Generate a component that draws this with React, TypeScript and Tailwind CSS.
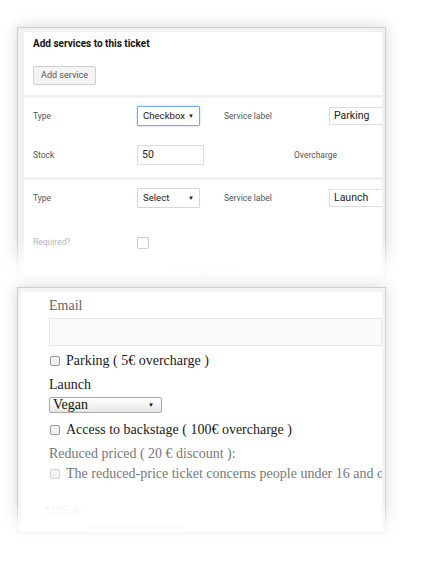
import React from "react";

const Caret = () => <span className="text-[6px] leading-none text-[#222]">▼</span>;

const FakeSelect = ({ value, focused }: { value: string; focused?: boolean }) => (
	<div
		className={`flex h-[20px] w-[63px] shrink-0 items-center justify-between rounded-[1px] border bg-white pl-[5px] pr-[5px] text-[9.6px] text-[#222] ${focused ? "border-[#7fa6dc] shadow-[0_0_2px_rgba(90,140,210,0.5)]" : "border-[#d6d6d6]"}`}
	>
		<span>{value}</span>
		<Caret />
	</div>
);

const TextBox = ({ value, w }: { value: string; w: string }) => (
	<div className={`flex h-[18px] shrink-0 items-center border border-[#dedede] bg-white pl-[4px] text-[10.5px] text-[#222] ${w}`}>
		{value}
	</div>
);

const Label = ({ children, w, faded }: { children: React.ReactNode; w: string; faded?: boolean }) => (
	<div className={`shrink-0 text-[8.5px] leading-[15px] ${faded ? "text-[#b3b3b3]" : "text-[#555]"} ${w}`}>{children}</div>
);

const ServicesCard = () => (
	<div className="relative ml-[17px] mt-[27px] h-[250px] w-[369px]">
		<div className="h-full overflow-hidden border border-[#cfcfcf] bg-[#f1f1f1] pl-[6px] pr-[3px] pt-[4px] shadow-[0_0_14px_rgba(0,0,0,0.16)]" style={{ fontFamily: "Roboto, sans-serif" }}>
			<div className="flex h-[63px] flex-col bg-white pl-[9px] pt-[4px]">
				<div className="text-[10px] font-bold leading-[16px] text-[#111]">Add services to this ticket</div>
				<div className="mt-[14px] flex h-[19px] w-[63px] items-center justify-center rounded-[2px] border border-[#cfcfcf] bg-[#f4f4f4] text-[9px] text-[#555]">
					Add service
				</div>
			</div>
			<div className="mt-[3px] flex h-[79px] flex-col gap-[19px] overflow-hidden bg-white pl-[9px] pt-[8px]">
				<div className="flex items-center">
					<Label w="w-[104px]">Type</Label>
					<FakeSelect value="Checkbox" focused />
					<Label w="ml-[24px] w-[105px]">Service label</Label>
					<TextBox value="Parking" w="w-[60px]" />
				</div>
				<div className="flex items-center">
					<Label w="w-[104px]">Stock</Label>
					<TextBox value="50" w="w-[67px] h-[20px]" />
					<Label w="ml-[90px]">Overcharge</Label>
				</div>
			</div>
			<div className="mt-[3px] flex flex-col overflow-hidden bg-white pl-[9px] pt-[8px]">
				<div className="flex items-center">
					<Label w="w-[104px]">Type</Label>
					<FakeSelect value="Select" />
					<Label w="ml-[24px] w-[105px]">Service label</Label>
					<TextBox value="Launch" w="w-[60px]" />
				</div>
				<div className="mt-[27px] flex items-center">
					<Label w="w-[104px]" faded>Required?</Label>
					<div className="h-[12px] w-[12px] rounded-[1px] border border-[#c8c8c8] bg-white" />
				</div>
				<div className="ml-[142px] mt-[14px] flex h-[14px] w-[58px] items-center justify-center border border-[#f0f0f0] text-[9px] text-[#eee]">
					Add option
				</div>
			</div>
		</div>
		<div className="absolute -left-[20px] -right-[20px] bottom-[-14px] h-[50px] bg-gradient-to-b from-white/0 via-white/80 to-white" />
	</div>
);

const SmallCheck = ({ faded }: { faded?: boolean }) => (
	<div className={`h-[10px] w-[10px] shrink-0 rounded-[2px] border ${faded ? "border-[#d6d6d6] bg-[#f3f3f3]" : "border-[#9a9a9a] bg-[#f2f2f2]"}`} />
);

const OrderCard = () => (
	<div className="relative ml-[17px] mt-[10px] h-[246px] w-[369px]">
		<div className="h-full overflow-hidden border border-[#cfcfcf] bg-[#f4f4f4] pl-[3px] pr-[3px] pt-[4px] shadow-[0_0_14px_rgba(0,0,0,0.16)]" style={{ fontFamily: '"Liberation Serif", serif' }}>
			<div className="h-full overflow-hidden bg-white pl-[28px] pt-[4px] leading-[20px]">
				<div className="text-[14px] text-[#666]">Email</div>
				<div className="mt-[2px] h-[28px] border border-[#e6e6e6] bg-[#fafafa]" />
				<div className="mt-[5px] flex items-center gap-[6px] pl-[1px]">
					<SmallCheck />
					<span className="text-[14px] text-[#1a1a1a]">Parking ( 5€ overcharge )</span>
				</div>
				<div className="mt-[4px] text-[14px] text-[#1a1a1a]">Launch</div>
				<div className="mt-[2px] flex h-[16px] w-[113px] items-center justify-between rounded-[2px] border border-[#a9a9a9] bg-gradient-to-b from-white to-[#e6e6e6] pl-[3px] pr-[7px] text-[14px] text-[#111]">
					<span>Vegan</span>
					<span className="text-[6px]">▼</span>
				</div>
				<div className="mt-[7px] flex items-center gap-[6px] pl-[1px]">
					<SmallCheck />
					<span className="text-[14px] text-[#1a1a1a]">Access to backstage ( 100€ overcharge )</span>
				</div>
				<div className="mt-[4px] text-[14px] text-[#777]">Reduced priced ( 20 € discount ):</div>
				<div className="flex items-center gap-[6px] whitespace-nowrap pl-[1px]">
					<SmallCheck faded />
					<span className="text-[14px] text-[#777]">The reduced-price ticket concerns people under 16 and over 65</span>
				</div>
				<div className="-ml-[6px] mt-[14px] text-[15px] leading-[24px] text-[#f1f4ee]" style={{ fontFamily: '"Open Sans", sans-serif' }}>105 €</div>
				<div className="ml-[40px] mt-[2px] h-[5px] w-[95px] bg-[#f5f5f5]" />
			</div>
		</div>
		<div className="absolute -left-[20px] -right-[20px] bottom-[-14px] h-[44px] bg-gradient-to-b from-white/0 via-white/70 to-white" />
	</div>
);

export default function App() {
	return (
		<div className="h-[565px] w-[422px] overflow-hidden bg-white">
			<ServicesCard />
			<OrderCard />
		</div>
	);
}
